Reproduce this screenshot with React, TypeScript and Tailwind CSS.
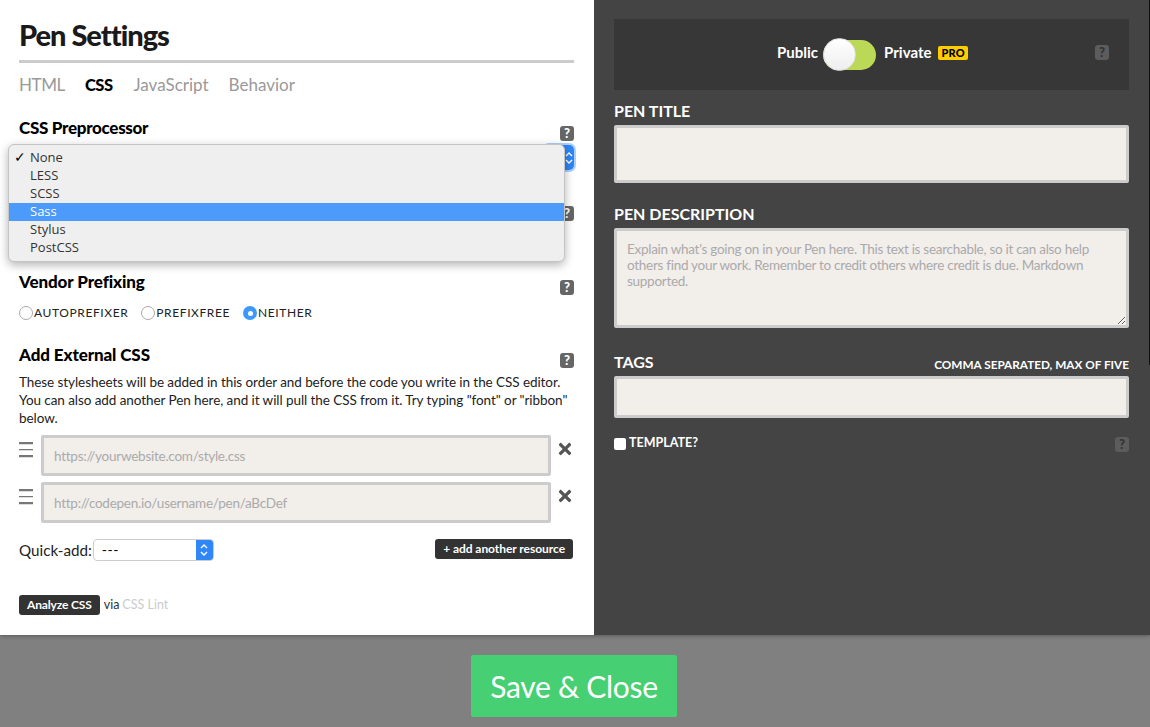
import React from 'react';
import { FaTimes } from 'react-icons/fa';

const HelpIcon = ({ className = 'bg-[#666] text-white' }: { className?: string }) => (
  <span className={`flex h-[15px] w-[14px] items-center justify-center rounded-[3px] text-[13px] font-black leading-none ${className}`}>?</span>
);

const SectionHead = ({ title, tracking }: { title: string; tracking: string }) => (
  <div className="flex items-end justify-between">
    <h3 className={`text-[17px] font-black leading-[20px] text-black ${tracking}`}>{title}</h3>
    <HelpIcon className="translate-y-[3px] bg-[#666] text-white" />
  </div>
);

const Radio = ({ label, checked }: { label: string; checked?: boolean }) => (
  <label className="flex items-center gap-[1px]">
    {checked ? (
      <span className="flex h-[14px] w-[14px] items-center justify-center rounded-full bg-[#3b99fc]">
        <span className="h-[5px] w-[5px] rounded-full bg-white" />
      </span>
    ) : (
      <span className="h-[14px] w-[14px] rounded-full border border-[#aaa] bg-white" />
    )}
    <span className="text-[12px] leading-[14px] tracking-[0.6px] text-[#222]">{label}</span>
  </label>
);

const Chevrons = () => (
  <svg width="8" height="14" viewBox="0 0 8 14" fill="none" stroke="white" strokeWidth="1.4">
    <path d="M1 5l3-3 3 3M1 9l3 3 3-3" />
  </svg>
);

const ResourceRow = ({ placeholder }: { placeholder: string }) => (
  <div className="flex items-start">
    <div className="flex w-[22px] shrink-0 flex-col gap-[5px] pt-[7px]">
      <span className="h-[1.5px] w-[14px] bg-[#777] shadow-[0_1px_0_#ddd]" />
      <span className="h-[1.5px] w-[14px] bg-[#777] shadow-[0_1px_0_#ddd]" />
      <span className="h-[1.5px] w-[14px] bg-[#777] shadow-[0_1px_0_#ddd]" />
    </div>
    <input
      placeholder={placeholder}
      className="h-[41px] w-[510px] rounded-[2px] border-[3px] border-[#ccc] bg-[#f2eeea] px-[10px] text-[13.5px] tracking-[-0.25px] outline-none placeholder:text-[#aaa]"
    />
    <FaTimes size={18} className="ml-[5px] mt-[5px] text-[#555]" />
  </div>
);

const DarkLabel = ({ children }: { children: React.ReactNode }) => (
  <label className="block text-[16px] font-bold leading-[20px] text-white">{children}</label>
);

const fieldClass = 'block w-full rounded-[2px] border-[3px] border-[#ccc] bg-[#f2eeea] outline-none';

export default function App() {
  return (
    <div className="flex h-[727px] w-[1150px] flex-col overflow-hidden bg-[#808080] font-['Lato','Liberation_Sans',sans-serif]">
      <div className="flex h-[635px] shrink-0 shadow-[0_1px_4px_rgba(0,0,0,0.3)]">
        {/* Left: settings for the CSS tab */}
        <div className="relative w-[594px] shrink-0 bg-white pl-[19px] pr-[20px] pt-[16px]">
          <h1 className="border-b-[3px] border-[#ccc] pb-[6px] text-[29px] font-black leading-[38px] tracking-[-1px] text-[#1a1a1a]">Pen Settings</h1>
          <nav className="mt-[11px] flex gap-[20px] text-[17px] leading-[22px] text-[#999]">
            <span className="tracking-[-0.4px]">HTML</span>
            <span className="mr-[1px] text-[16.5px] font-black tracking-[-0.5px] text-black">CSS</span>
            <span>JavaScript</span>
            <span>Behavior</span>
          </nav>

          <div className="mt-[22px]">
            <SectionHead title="CSS Preprocessor" tracking="tracking-[-0.3px]" />
            <div className="ml-auto mt-[7px] flex h-[25px] w-[30px] items-center justify-end rounded-[5px] bg-[#2f86f6] pr-[1px] shadow-[0_0_0_2px_rgba(90,160,250,0.5)]">
              <Chevrons />
            </div>
          </div>

          <div className="mt-[36px] flex justify-end">
            <HelpIcon />
          </div>

          <div className="mt-[51px]">
            <SectionHead title="Vendor Prefixing" tracking="tracking-[-0.1px]" />
            <div className="mt-[14px] flex gap-[13px]">
              <Radio label="AUTOPREFIXER" />
              <Radio label="PREFIXFREE" />
              <Radio label="NEITHER" checked />
            </div>
          </div>

          <div className="mt-[25px]">
            <SectionHead title="Add External CSS" tracking="tracking-[-0.1px]" />
            <p className="mt-[8px] text-[13.5px] leading-[18px] tracking-[-0.07px] text-[#222]">
              These stylesheets will be added in this order and before the code you write in the CSS editor. You can also add another Pen here, and it will pull the CSS from it. Try typing "font" or "ribbon" below.
            </p>
            <div className="mt-[8px] flex flex-col gap-[6px]">
              <ResourceRow placeholder="https://yourwebsite.com/style.css" />
              <ResourceRow placeholder="http://codepen.io/username/pen/aBcDef" />
            </div>
          </div>

          <div className="mt-[16px] flex items-start justify-between">
            <div className="flex items-center gap-[1px] text-[15.2px] leading-[22px] text-[#222]">
              <span>Quick-add:</span>
              <div className="flex h-[22px] w-[121px] items-center overflow-hidden rounded-[4px] border border-[#ccc] bg-white">
                <span className="flex-1 pl-[8px] text-[14px] tracking-[0.5px] text-black">---</span>
                <span className="flex h-full w-[17px] items-center justify-center bg-[#2f86f6]">
                  <Chevrons />
                </span>
              </div>
            </div>
            <button className="mr-[1px] h-[20px] rounded-[3px] bg-[#333] px-[8px] text-[12px] font-bold leading-[20px] tracking-[-0.05px] text-white">+ add another resource</button>
          </div>

          <div className="mt-[34px] flex items-center gap-[4px] text-[12.5px]">
            <button className="h-[20px] rounded-[3px] bg-[#333] px-[8px] text-[12px] font-bold leading-[20px] tracking-[-0.15px] text-white">Analyze CSS</button>
            <span className="text-[#333]">via</span>
            <span className="-ml-[1px] text-[#ccc]">CSS Lint</span>
          </div>

          {/* Open native select menu lying over the form */}
          <div className="absolute left-[8px] top-[144px] w-[557px] rounded-[6px] border border-[#c4c4c4] bg-[#efefef] py-[4px] font-['Open_Sans',sans-serif] text-[13px] leading-[16px] text-[#333] shadow-[0_3px_10px_rgba(0,0,0,0.3)]">
            {['None', 'LESS', 'SCSS', 'Sass', 'Stylus', 'PostCSS'].map((item) => (
              <div key={item} className={`relative h-[18px] pl-[21px] ${item === 'Sass' ? 'bg-[#4c9afa] text-white' : ''}`}>
                {item === 'None' && <span className="absolute left-[5px] text-[14px] text-black">✓</span>}
                {item}
              </div>
            ))}
          </div>
        </div>

        {/* Right: pen details */}
        <div className="relative flex-1 bg-[#444] pl-[20px] pr-[21px] pt-[19px]">
          <span className="absolute right-0 top-0 h-[365px] w-[1px] bg-[#111]" />
          <div className="relative flex h-[71px] items-center justify-center pl-[2px]">
            <div className="absolute inset-0 bg-[#373737]" />
            <span className="relative pb-[4px] text-[15px] font-bold text-white">Public</span>
            <span className="relative ml-[5px] h-[30px] w-[53px] rounded-full bg-[#bbd957]">
              <span className="absolute left-0 -top-[2px] h-[33px] w-[33px] rounded-full border border-[#ddd] bg-gradient-to-b from-white to-[#eee]" />
            </span>
            <span className="relative ml-[8px] pb-[4px] text-[15px] font-bold text-white">Private</span>
            <span className="relative mb-[4px] ml-[7px] rounded-[2px] bg-[#ffcc00] px-[3px] text-[11px] font-black leading-[14px] tracking-[0.2px] text-black">PRO</span>
            <HelpIcon className="absolute right-[20px] top-[26px] bg-[#5c5c5c] text-[#333]" />
          </div>

          <div className="mt-[11px]">
            <DarkLabel>PEN TITLE</DarkLabel>
            <input className={`${fieldClass} mt-[4px] h-[58px]`} />
          </div>

          <div className="mt-[21px]">
            <DarkLabel>PEN DESCRIPTION</DarkLabel>
            <textarea
              className={`${fieldClass} mt-[4px] h-[100px] px-[10px] pt-[10px] text-[13.5px] leading-[16px] tracking-[-0.28px] placeholder:text-[#aaa]`}
              placeholder="Explain what's going on in your Pen here. This text is searchable, so it can also help others find your work. Remember to credit others where credit is due. Markdown supported."
            />
          </div>

          <div className="mt-[24px]">
            <div className="flex items-end justify-between">
              <DarkLabel>TAGS</DarkLabel>
              <span className="-mb-[1px] text-[11.75px] font-bold leading-[16px] text-white">COMMA SEPARATED, MAX OF FIVE</span>
            </div>
            <input className={`${fieldClass} mt-[4px] h-[42px]`} />
          </div>

          <div className="mt-[18px] flex items-center justify-between">
            <label className="flex items-center gap-[3px] text-[12.5px] font-bold leading-[14px] text-white">
              <span className="h-[12px] w-[12px] rounded-[2px] bg-white" />
              <span className="pb-[2px]">TEMPLATE?</span>
            </label>
            <HelpIcon className="bg-[#5c5c5c] text-[#333]" />
          </div>
        </div>
      </div>

      <div className="flex flex-1 items-start justify-center pr-[2px] pt-[20px]">
        <button className="h-[62px] w-[206px] rounded-[2px] bg-[#47cf73] text-[30px] leading-[62px] tracking-[-0.3px] text-white">Save &amp; Close</button>
      </div>
    </div>
  );
}
